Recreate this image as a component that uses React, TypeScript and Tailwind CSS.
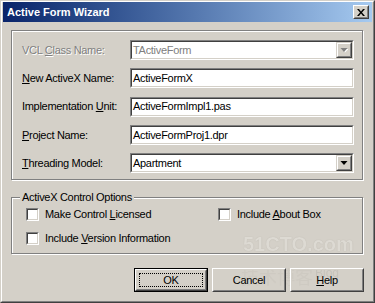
import React from "react";

const font = { fontFamily: '"Liberation Sans", Arial, sans-serif' };

function U({ children }: { children: React.ReactNode }) {
  return <span className="underline underline-offset-[1px]">{children}</span>;
}

function Sunken({ children, className = "" }: { children: React.ReactNode; className?: string }) {
  return (
    <div className={"border border-t-[#808080] border-l-[#808080] border-r-white border-b-white " + className}>
      <div className="h-full w-full border border-t-[#404040] border-l-[#404040] border-r-[#d4d0c8] border-b-[#d4d0c8] bg-white flex items-center">
        {children}
      </div>
    </div>
  );
}

function Arrow({ disabled }: { disabled?: boolean }) {
  return (
    <div className="w-[16px] h-full border border-t-[#d4d0c8] border-l-[#d4d0c8] border-r-[#404040] border-b-[#404040] bg-[#d4d0c8]">
      <div className="w-full h-full border border-t-white border-l-white border-r-[#808080] border-b-[#808080] flex items-center justify-center">
        <svg width="8" height="5" viewBox="0 0 8 5">
          {disabled && <path d="M1.5 1 L8.5 1 L5 4.5 Z" fill="#fff" />}
          <path d="M0.5 0 L7.5 0 L4 4 Z" fill={disabled ? "#808080" : "#000"} />
        </svg>
      </div>
    </div>
  );
}

function Row({ label, children }: { label: React.ReactNode; children: React.ReactNode }) {
  return (
    <div className="flex items-center h-[20px]">
      <div className="w-[108px] shrink-0">{label}</div>
      {children}
    </div>
  );
}

function Field({ value }: { value: string }) {
  return (
    <Sunken className="w-[224px] h-[20px]">
      <span className="pl-[1px] text-black">{value}</span>
    </Sunken>
  );
}

function Combo({ value, disabled }: { value: string; disabled?: boolean }) {
  return (
    <Sunken className="w-[224px] h-[20px]">
      <span className={"pl-[1px] flex-1 " + (disabled ? "text-[#808080]" : "text-black")}>{value}</span>
      <Arrow disabled={disabled} />
    </Sunken>
  );
}

function Check({ label }: { label: React.ReactNode }) {
  return (
    <div className="flex items-center h-[13px]">
      <div className="w-[13px] h-[13px] border border-t-[#808080] border-l-[#808080] border-r-white border-b-white">
        <div className="w-full h-full border border-t-[#404040] border-l-[#404040] border-r-[#d4d0c8] border-b-[#d4d0c8] bg-white" />
      </div>
      <span className="ml-[6px]">{label}</span>
    </div>
  );
}

function Button({ children, def }: { children: React.ReactNode; def?: boolean }) {
  const inner = (
    <div className="w-full h-full border border-t-white border-l-white border-r-[#404040] border-b-[#404040]">
      <div className="w-full h-full border border-t-[#d4d0c8] border-l-[#d4d0c8] border-r-[#808080] border-b-[#808080] flex items-center justify-center relative">
        {def && <div className="absolute inset-[2px] border border-dotted border-black" />}
        <span>{children}</span>
      </div>
    </div>
  );
  return (
    <div className={"w-[74px] h-[24px] " + (def ? "border border-black" : "")}>{inner}</div>
  );
}

export default function App() {
  return (
    <div
      className="w-[375px] h-[303px] bg-[#d4d0c8] text-[11px] tracking-[-0.3px] text-black relative overflow-hidden border-t border-l border-t-[#d4d0c8] border-l-[#d4d0c8] border-r border-b border-r-[#404040] border-b-[#404040]"
      style={font}
    >
      {/* watermark (behind content) */}
      <div className="absolute left-[242px] top-[233px] pointer-events-none select-none leading-none opacity-60">
        <div className="text-[20px] font-bold text-[#e4e1db] tracking-[0px] [text-shadow:0_0_1px_#9c988f]">
          51CTO.com
        </div>
      </div>
      <div className="absolute left-[240px] top-[266px] pointer-events-none select-none leading-none opacity-50 flex items-end gap-[2px]">
        <span
          className="text-[18px] text-[#c9c5bd] tracking-[0px]"
          style={{ fontFamily: '"Noto Sans CJK SC", sans-serif' }}
        >
          技术博客
        </span>
        <span className="text-[12px] text-[#b9b5ad] tracking-[0px] mb-[6px]">Blog</span>
      </div>

      <div className="relative h-full border-l border-t border-l-white border-t-white border-r border-b border-r-[#808080] border-b-[#808080] pl-[1px] pr-[1px]">
        {/* Title bar */}
        <div className="h-[20px] flex items-center justify-between pl-[4px] pr-[3px] bg-gradient-to-r from-[#0a246a] to-[#a6caf0]">
          <span className="text-white font-bold text-[11px] tracking-normal">Active Form Wizard</span>
          <div className="w-[16px] h-[14px] border border-t-white border-l-white border-r-[#404040] border-b-[#404040] bg-[#d4d0c8]">
            <div className="w-full h-full border border-t-[#d4d0c8] border-l-[#d4d0c8] border-r-[#808080] border-b-[#808080] flex items-center justify-center">
              <svg width="8" height="7" viewBox="0 0 8 7">
                <path d="M0 0 L2 0 L4 2.5 L6 0 L8 0 L5 3.5 L8 7 L6 7 L4 4.5 L2 7 L0 7 L3 3.5 Z" fill="#000" />
              </svg>
            </div>
          </div>
        </div>

        {/* Top panel */}
        <div className="ml-[8px] mr-[9px] mt-[8px] h-[150px] border border-[#808080] shadow-[inset_1px_1px_0_#fff,1px_1px_0_#fff] pl-[10px] pt-[9px] flex flex-col gap-[8.3px]">
          <Row
            label={
              <span className="text-[#808080] [text-shadow:1px_1px_0_#fff]">
                VCL <U>C</U>lass Name:
              </span>
            }
          >
            <Combo value="TActiveForm" disabled />
          </Row>
          <Row label={<span><U>N</U>ew ActiveX Name:</span>}>
            <Field value="ActiveFormX" />
          </Row>
          <Row label={<span>Implementation <U>U</U>nit:</span>}>
            <Field value="ActiveFormImpl1.pas" />
          </Row>
          <Row label={<span><U>P</U>roject Name:</span>}>
            <Field value="ActiveFormProj1.dpr" />
          </Row>
          <Row label={<span><U>T</U>hreading Model:</span>}>
            <Combo value="Apartment" />
          </Row>
        </div>

        {/* Group box */}
        <div className="relative ml-[8px] mr-[9px] mt-[17px] h-[57px] border border-[#808080] shadow-[inset_1px_1px_0_#fff,1px_1px_0_#fff] pl-[14px] pt-[10px] flex flex-col gap-[11px]">
          <span className="absolute -top-[7px] left-[8px] px-[2px] bg-[#d4d0c8] leading-[13px]">ActiveX Control Options</span>
          <div className="flex">
            <div className="w-[192px]">
              <Check label={<span>Make Control <U>L</U>icensed</span>} />
            </div>
            <Check label={<span>Include <U>A</U>bout Box</span>} />
          </div>
          <Check label={<span>Include <U>V</U>ersion Information</span>} />
        </div>

        {/* Buttons */}
        <div className="mt-[14px] mr-[8px] flex justify-end gap-[4px]">
          <Button def>OK</Button>
          <Button>Cancel</Button>
          <Button>
            <U>H</U>elp
          </Button>
        </div>
      </div>
    </div>
  );
}
